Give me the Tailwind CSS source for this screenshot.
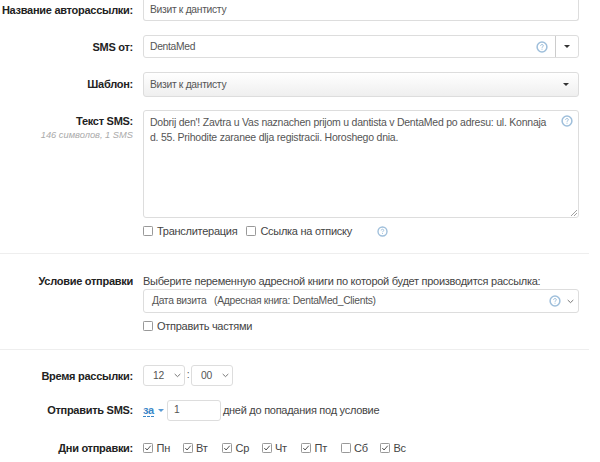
<!DOCTYPE html>
<html><head><meta charset="utf-8"><script src="https://cdn.jsdelivr.net/npm/@tailwindcss/browser@4"></script></head>
<body class="bg-white overflow-hidden">
<svg class="hidden"><defs>
<symbol id="q" viewBox="0 0 12 12"><circle cx="6" cy="6" r="4.9" fill="none" stroke="#9fbfdb" stroke-width="1.5"/><path d="M4.6 4.9c0-1 .7-1.4 1.4-1.4s1.4.5 1.4 1.2c0 1-1.4 1-1.4 2.1" fill="none" stroke="#9fbfdb" stroke-width="1"/><rect x="5.5" y="7.7" width="1" height="1" fill="#9fbfdb"/></symbol>
<symbol id="c" viewBox="0 0 11 11"><rect x=".5" y=".5" width="10" height="10" rx="1" fill="#fff" stroke="#8a8a8a"/><path d="M2.5 5.5l2 2.2 4-4.7" fill="none" stroke="#555" stroke-width="1.1"/></symbol>
<symbol id="u" viewBox="0 0 11 11"><rect x=".5" y=".5" width="10" height="10" rx="1" fill="#fff" stroke="#8a8a8a"/></symbol>
<symbol id="v" viewBox="0 0 8 5"><path d="M.8.8L4 3.8 7.2.8" fill="none" stroke="#666" stroke-width="1"/></symbol>
</defs></svg>
<div class="w-[600px] h-[462px] overflow-hidden font-['Liberation_Sans',Arial,sans-serif] text-[11px] tracking-[-0.27px] text-[#444]">

<div class="-mt-[3px] flex">
  <div class="w-[133px] pt-[5px] text-right font-bold leading-[16px] text-[#222] whitespace-nowrap">Название авторассылки:</div>
  <div class="ml-[10px] w-[436px] h-[24px] border-[1.5px] border-t-0 border-[#ddd] rounded-[3px] pl-[6px] leading-[25px] text-[10.3px] tracking-[-0.3px] text-[#555]">Визит к дантисту</div>
</div>

<div class="mt-[14px] flex">
  <div class="w-[133px] pt-[4px] text-right font-bold leading-[16px] text-[#222]">SMS от:</div>
  <div class="ml-[10px] w-[436px] h-[23px] border-[1.5px] border-[#ddd] rounded-[3px] flex items-center">
    <div class="flex-1 pl-[6px] text-[10.3px] tracking-[-0.3px] text-[#555]">DentaMed</div>
    <svg class="w-[12px] h-[12px] mr-[7px]"><use href="#q"/></svg>
    <div class="w-[23px] h-full border-l border-[#ccc] flex items-center justify-center"><div class="w-0 h-0 border-x-[3px] border-x-transparent border-t-[3px] border-t-[#333]"></div></div>
  </div>
</div>

<div class="mt-[14px] flex">
  <div class="w-[133px] pt-[4px] text-right font-bold leading-[16px] text-[#222]">Шаблон:</div>
  <div class="ml-[10px] w-[436px] h-[25px] border-[1.5px] border-[#ddd] rounded-[3px] flex items-center justify-between pl-[6px] pr-[9px] bg-gradient-to-b from-white to-[#efefef] text-[10.3px] tracking-[-0.3px] text-[#555]">
    <span>Визит к дантисту</span>
    <div class="w-0 h-0 border-x-[3px] border-x-transparent border-t-[3px] border-t-[#333]"></div>
  </div>
</div>

<div class="mt-[13px] flex">
  <div class="w-[133px] text-right pt-[4px]">
    <div class="font-bold leading-[15px] text-[#222]">Текст SMS:</div>
    <div class="italic text-[9.3px] tracking-normal leading-[12px] text-[#aaa]">146 символов, 1 SMS</div>
  </div>
  <div class="ml-[10px] w-[436px]">
    <div class="relative h-[108px] border-[1.5px] border-[#ddd] rounded-[3px] pl-[6px] pt-[4px] pr-[24px] leading-[14.5px] text-[10.5px] tracking-[-0.23px] text-[#555]">
      Dobrij den'! Zavtra u Vas naznachen prijom u dantista v DentaMed po adresu: ul. Konnaja d. 55. Prihodite zaranee dlja registracii. Horoshego dnia.
      <svg class="absolute right-[5px] top-[4px] w-[12px] h-[12px]"><use href="#q"/></svg>
      <svg class="absolute right-[1px] bottom-[1px] w-[6px] h-[6px]" viewBox="0 0 6 6"><path d="M0 6L6 0M3 6L6 3" stroke="#888" stroke-width=".8"/></svg>
    </div>
    <div class="mt-[6px] flex items-center h-[14px]">
      <svg class="w-[10px] h-[10px]"><use href="#u"/></svg><span class="ml-[4px]">Транслитерация</span>
      <svg class="ml-[9px] w-[10px] h-[10px]"><use href="#u"/></svg><span class="ml-[4px]">Ссылка на отписку</span>
      <svg class="ml-[25px] w-[11px] h-[11px]"><use href="#q"/></svg>
    </div>
  </div>
</div>

<div class="mt-[15px] w-[589px] h-px bg-[#eee]"></div>

<div class="mt-[19px] flex">
  <div class="w-[133px] text-right font-bold leading-[16px] text-[#222]">Условие отправки</div>
  <div class="ml-[10px] w-[436px]">
    <div class="h-[16px] leading-[16px] whitespace-nowrap">Выберите переменную адресной книги по которой будет производится рассылка:</div>
    <div class="h-[24px] border-[1.5px] border-[#ddd] rounded-[3px] flex items-center pl-[8px] pr-[4px] text-[10.3px] tracking-[-0.3px] text-[#555]">
      <span class="flex-1 whitespace-pre">Дата визита   (Адресная книга: DentaMed_Clients)</span>
      <svg class="w-[12px] h-[12px] mr-[6px]"><use href="#q"/></svg>
      <svg class="w-[7px] h-[5px]"><use href="#v"/></svg>
    </div>
    <div class="mt-[6px] flex items-center h-[14px]">
      <svg class="w-[10px] h-[10px]"><use href="#u"/></svg><span class="ml-[4px]">Отправить частями</span>
    </div>
  </div>
</div>

<div class="mt-[16px] w-[589px] h-px bg-[#eee]"></div>

<div class="mt-[15px] flex items-center h-[21px]">
  <div class="w-[133px] pt-[2px] text-right font-bold text-[#222]">Время рассылки:</div>
  <div class="ml-[10px] flex items-center text-[10.3px] tracking-[-0.3px] text-[#555]">
    <div class="w-[42px] h-[21px] border-[1.5px] border-[#ddd] rounded-[3px] flex items-center justify-between pl-[9px] pr-[3px]"><span>12</span><svg class="w-[7px] h-[5px]"><use href="#v"/></svg></div>
    <span class="w-[6px] text-center leading-none">:</span>
    <div class="w-[42px] h-[21px] border-[1.5px] border-[#ddd] rounded-[3px] flex items-center justify-between pl-[9px] pr-[3px]"><span>00</span><svg class="w-[7px] h-[5px]"><use href="#v"/></svg></div>
  </div>
</div>

<div class="mt-[14px] flex items-center h-[21px]">
  <div class="w-[133px] text-right font-bold text-[#222]">Отправить SMS:</div>
  <div class="ml-[10px] flex items-center">
    <span class="font-bold text-[#3a87c8] border-b border-dashed border-[#3a87c8] leading-[12px]">за</span>
    <div class="ml-[4px] w-0 h-0 border-x-[3px] border-x-transparent border-t-[3px] border-t-[#5a9bd5]"></div>
    <div class="ml-[3px] w-[54px] h-[21px] border-[1.5px] border-[#ddd] rounded-[3px] pl-[6px] leading-[18px] text-[10.3px] tracking-[-0.3px] text-[#555]">1</div>
    <span class="ml-[2px]">дней до попадания под условие</span>
  </div>
</div>

<div class="mt-[19px] flex items-center h-[16px]">
  <div class="w-[133px] text-right font-bold text-[#222]">Дни отправки:</div>
  <div class="ml-[10px] flex items-center">
    <div class="w-[39.5px] flex items-center gap-[3.5px]"><svg class="w-[10px] h-[10px]"><use href="#c"/></svg>Пн</div>
    <div class="w-[39.5px] flex items-center gap-[3.5px]"><svg class="w-[10px] h-[10px]"><use href="#c"/></svg>Вт</div>
    <div class="w-[39.5px] flex items-center gap-[3.5px]"><svg class="w-[10px] h-[10px]"><use href="#c"/></svg>Ср</div>
    <div class="w-[39.5px] flex items-center gap-[3.5px]"><svg class="w-[10px] h-[10px]"><use href="#c"/></svg>Чт</div>
    <div class="w-[39.5px] flex items-center gap-[3.5px]"><svg class="w-[10px] h-[10px]"><use href="#c"/></svg>Пт</div>
    <div class="w-[39.5px] flex items-center gap-[3.5px]"><svg class="w-[10px] h-[10px]"><use href="#u"/></svg>Сб</div>
    <div class="w-[39.5px] flex items-center gap-[3.5px]"><svg class="w-[10px] h-[10px]"><use href="#c"/></svg>Вс</div>
  </div>
</div>
</div>
</body></html>
